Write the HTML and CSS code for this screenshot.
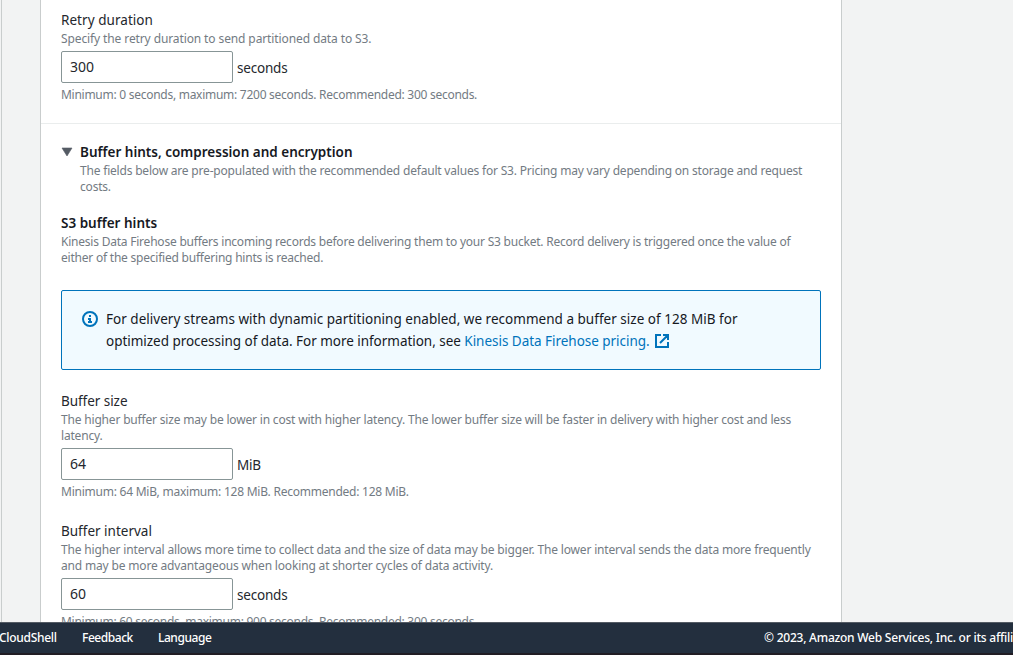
FILE: index.html
```html
<!DOCTYPE html>
<html lang="en">
<head>
<meta charset="utf-8">
<title>Create delivery stream</title>
<link rel="stylesheet" href="styles.css">
</head>
<body>
<div class="app">
  <main class="page">
    <section class="panel">
      <div class="field field-retry">
        <label class="label label-retry" for="retry">Retry duration</label>
        <p class="hint hint-retry">Specify the retry duration to send partitioned data to S3.</p>
        <div class="control"><input id="retry" class="input" value="300"><span class="unit">seconds</span></div>
        <p class="hint constraint">Minimum: 0 seconds, maximum: 7200 seconds. Recommended: 300 seconds.</p>
      </div>
      <div class="section">
        <div class="expander">
          <svg class="caret" width="12" height="22" viewBox="0 0 12 22"><path d="M1 7h10l-5 8z" fill="#545b64" stroke="#545b64" stroke-width=".6" stroke-linejoin="round"/></svg>
          <div>
            <h2 class="heading">Buffer hints, compression and encryption</h2>
            <p class="hint hint-section">The fields below are pre-populated with the recommended default values for S3. Pricing may vary depending on storage and request<br>costs.</p>
          </div>
        </div>
        <div class="group">
          <h3 class="heading">S3 buffer hints</h3>
          <p class="hint hint-buffer">Kinesis Data Firehose buffers incoming records before delivering them to your S3 bucket. Record delivery is triggered once the value of<br>either of the specified buffering hints is reached.</p>
        </div>
        <div class="alert">
          <svg class="info" width="16" height="16" viewBox="0 0 16 16" fill="none" stroke="#0073bb" stroke-width="2"><circle cx="8" cy="8" r="7"/><path d="M8 4v2M6 8h2v3M6 11h4" /></svg>
          <p class="message"><span class="lead">For delivery streams with dynamic partitioning enabled, we recommend a buffer size of 128 MiB for</span><br>optimized processing of data. For more information, see <a class="link" href="#">Kinesis Data Firehose pricing.<svg class="external" width="14" height="14" viewBox="0 0 14 14" fill="none" stroke="#0073bb" stroke-width="2"><path d="M6 1H1v12h12V8M8 1h5v5M13 1L5 9"/></svg></a></p>
        </div>
        <div class="field field-size">
          <label class="label label-size" for="size">Buffer size</label>
          <p class="hint hint-size">The higher buffer size may be lower in cost with higher latency. The lower buffer size will be faster in delivery with higher cost and less<br>latency.</p>
          <div class="control"><input id="size" class="input" value="64"><span class="unit">MiB</span></div>
          <p class="hint constraint constraint-size">Minimum: 64 MiB, maximum: 128 MiB. Recommended: 128 MiB.</p>
        </div>
        <div class="field field-interval">
          <label class="label" for="interval">Buffer interval</label>
          <p class="hint hint-interval">The higher interval allows more time to collect data and the size of data may be bigger. The lower interval sends the data more frequently<br>and may be more advantageous when looking at shorter cycles of data activity.</p>
          <div class="control"><input id="interval" class="input" value="60"><span class="unit">seconds</span></div>
          <p class="hint constraint">Minimum: 60 seconds, maximum: 900 seconds. Recommended: 300 seconds.</p>
        </div>
      </div>
    </section>
  </main>
  <footer class="footer">
    <nav class="footer-nav"><span class="shell">CloudShell</span><span class="feedback">Feedback</span><span>Language</span></nav>
    <span class="copyright">© 2023, Amazon Web Services, Inc. or its affiliates.</span>
  </footer>
</div>
</body>
</html>
```

FILE: styles.css
```css
* { box-sizing: border-box; }
body { margin: 0; overflow: hidden; background: #f2f3f3; color: #16191f; font: 14px/22px "Noto Sans", sans-serif; }
h2, h3, p { margin: 0; }
.app { display: flex; flex-direction: column; height: 655px; width: 1013px; overflow: hidden; }
.page { flex: 1; min-height: 0; overflow: hidden; margin-left: 1px; border-left: 1px solid #c9cdcd; padding-left: 38px; }
.panel { width: 802px; height: 640px; background: #fff; border: solid #c9cdcd; border-width: 0 1px; white-space: nowrap; }
.field { display: flex; flex-direction: column; align-items: flex-start; }
.field-retry { height: 124px; padding: 9px 20px 0; border-bottom: 1px solid #eaeded; }
.section { padding: 17px 20px 0; }
.label { display: block; height: 22px; color: #24272d; font-size: 13.5px; letter-spacing: 0; }
.label-retry { letter-spacing: 0.05px; }
.label-size { letter-spacing: -0.05px; }
.hint { color: #737b83; font-size: 12px; line-height: 16px; letter-spacing: -0.25px; }
.hint-retry { letter-spacing: -0.11px; }
.hint-section { letter-spacing: -0.195px; }
.hint-buffer { letter-spacing: -0.22px; }
.hint-size { letter-spacing: -0.18px; }
.hint-interval { letter-spacing: -0.165px; }
.constraint { letter-spacing: -0.27px; }
.constraint-size { letter-spacing: -0.24px; }
.control { display: flex; align-items: center; gap: 4px; margin: 4px 0; height: 32px; }
.input { width: 172px; height: 32px; margin: 0; padding: 0 8px 2px; border: 1px solid #879596; border-radius: 2px; background: #fff; color: #24272d; font: 14px "Noto Sans", sans-serif; }
.unit { padding-top: 2px; color: #24272d; font-size: 13.5px; letter-spacing: -0.2px; }
.expander { display: flex; gap: 7px; }
.caret { flex: none; }
.heading { font-size: 13.5px; line-height: 22px; font-weight: 600; letter-spacing: 0; }
.group { margin-top: 17px; }
.alert { display: flex; gap: 8px; width: 760px; height: 80px; margin-top: 24px; padding: 17px 20px; background: #f1faff; border: 1px solid #0073bb; border-radius: 2px; }
.info { flex: none; margin-top: 3px; }
.message { font-size: 13.5px; letter-spacing: -0.03px; }
.lead { letter-spacing: 0.02px; }
.link { color: #0073bb; text-decoration: none; }
.external { margin-left: 5px; vertical-align: -2px; }
.field-size, .field-interval { margin-top: 20px; }
.footer { display: flex; justify-content: space-between; flex: none; height: 33px; padding-top: 5px; background: #232f3e; border-top: 1px solid #545b64; border-bottom: 2px solid #211d24; color: #fff; font-size: 12px; font-weight: 500; line-height: 20px; white-space: nowrap; }
.footer-nav { display: flex; margin-left: -1px; letter-spacing: -0.45px; }
.shell { width: 83px; letter-spacing: -0.3px; }
.feedback { width: 76px; }
.copyright { width: 249px; overflow: hidden; letter-spacing: -0.23px; }
```
